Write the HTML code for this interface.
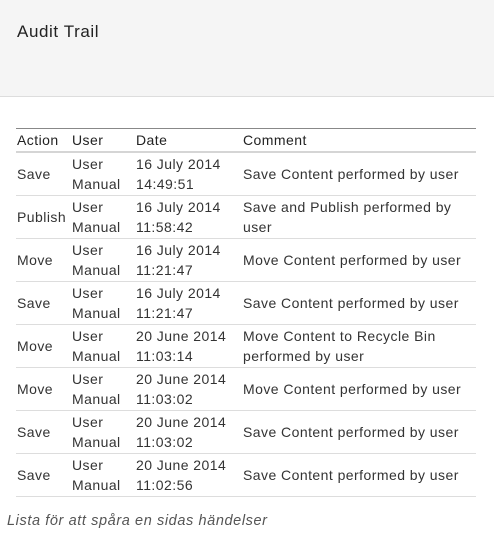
<!DOCTYPE html>
<html><head><style>
body{margin:0;width:494px;height:536px;background:#fff;font-family:"Liberation Sans",sans-serif;color:#333;overflow:hidden}
.hd{height:96px;background:#f5f5f5;border-bottom:1px solid #ddd;position:relative}
.hd h1{position:absolute;left:17px;top:22px;margin:0;font-size:17px;letter-spacing:0.6px;font-weight:normal;color:#222}
table{position:absolute;left:16px;top:128px;width:460px;border-collapse:collapse;font-size:14px;letter-spacing:0.45px;border-top:1px solid #888}
th{text-align:left;font-weight:normal;color:#222;height:22px;padding:0 0 0 1px;border-bottom:2px solid #d5d5d5;line-height:20px}
td{padding:1px 0 1px 1px;line-height:20px;border-bottom:1px solid #ddd;height:40px;vertical-align:middle;color:#333}
.cap{position:absolute;left:7px;top:513px;font-style:italic;font-size:14.5px;letter-spacing:0.6px;color:#555}
</style></head><body>
<div class="hd"><h1>Audit Trail</h1></div>
<table>
<colgroup><col style="width:55px"><col style="width:64px"><col style="width:107px"><col></colgroup>
<tr><th>Action</th><th>User</th><th>Date</th><th>Comment</th></tr>
<tr><td>Save</td><td>User<br>Manual</td><td>16 July 2014<br>14:49:51</td><td>Save Content performed by user</td></tr>
<tr><td>Publish</td><td>User<br>Manual</td><td>16 July 2014<br>11:58:42</td><td>Save and Publish performed by<br>user</td></tr>
<tr><td>Move</td><td>User<br>Manual</td><td>16 July 2014<br>11:21:47</td><td>Move Content performed by user</td></tr>
<tr><td>Save</td><td>User<br>Manual</td><td>16 July 2014<br>11:21:47</td><td>Save Content performed by user</td></tr>
<tr><td>Move</td><td>User<br>Manual</td><td>20 June 2014<br>11:03:14</td><td>Move Content to Recycle Bin<br>performed by user</td></tr>
<tr><td>Move</td><td>User<br>Manual</td><td>20 June 2014<br>11:03:02</td><td>Move Content performed by user</td></tr>
<tr><td>Save</td><td>User<br>Manual</td><td>20 June 2014<br>11:03:02</td><td>Save Content performed by user</td></tr>
<tr><td>Save</td><td>User<br>Manual</td><td>20 June 2014<br>11:02:56</td><td>Save Content performed by user</td></tr>
</table>
<div class="cap">Lista för att spåra en sidas händelser</div>
</body></html>
